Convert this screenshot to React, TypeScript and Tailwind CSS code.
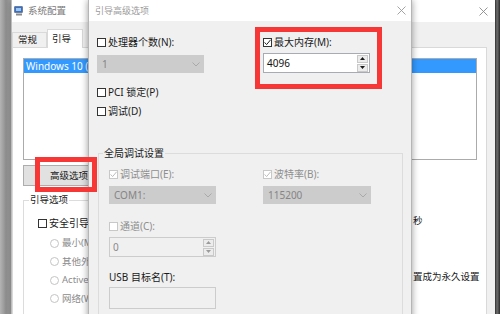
import React from "react";

const font = "font-['Noto_Sans','Noto_Sans_CJK_SC',sans-serif]";

function Box({ checked = false, disabled = false }: { checked?: boolean; disabled?: boolean }) {
    const stroke = disabled ? "#bdbdbd" : "#222222";
    return (
        <span className={`w-[9px] h-[9px] shrink-0 bg-white border flex items-center justify-center ${disabled ? "border-[#c8c8c8]" : "border-[#333333]"}`}>
            {checked && (
                <svg width="7" height="7" viewBox="0 0 7 7">
                    <polyline points="0.6,3.4 2.6,5.6 6.6,0.8" fill="none" stroke={stroke} strokeWidth="1" />
                </svg>
            )}
        </span>
    );
}

function CheckRow({ label, checked, disabled }: { label: string; checked?: boolean; disabled?: boolean }) {
    return (
        <div className={`h-[12px] flex items-center gap-[2px] text-[10px] leading-[12px] whitespace-nowrap ${disabled ? "text-[#8e8e8e]" : "text-[#1a1a1a]"}`}>
            <Box checked={checked} disabled={disabled} />
            <span>{label}</span>
        </div>
    );
}

function Radio({ label }: { label: string }) {
    return (
        <div className="h-[12px] flex items-center gap-[3px] text-[9.5px] leading-[12px] whitespace-nowrap text-[#8c8c8c]">
            <span className="w-[9px] h-[9px] shrink-0 rounded-full bg-white border border-[#c4c4c4]" />
            <span>{label}</span>
        </div>
    );
}

function Select({ value, width = "w-[107px]" }: { value: string; width?: string }) {
    return (
        <div className={`h-[18px] ${width} bg-[#cccccc] flex items-center justify-between pl-[5px] pr-[4px] text-[10px] leading-[12px] text-[#858585]`}>
            <span>{value}</span>
            <svg width="8" height="5" viewBox="0 0 8 5">
                <polyline points="0.5,0.5 4,4 7.5,0.5" fill="none" stroke="#a9a9a9" strokeWidth="1" />
            </svg>
        </div>
    );
}

function Arrow({ up, color }: { up?: boolean; color: string }) {
    return (
        <svg width="5" height="3" viewBox="0 0 5 3">
            <polygon points={up ? "2.5,0 5,3 0,3" : "0,0 5,0 2.5,3"} fill={color} />
        </svg>
    );
}

function Spin({ value, disabled = false }: { value: string; disabled?: boolean }) {
    const c = disabled ? "#9a9a9a" : "#1a1a1a";
    return (
        <div className={`h-[20px] w-[107px] border flex items-center justify-between pl-[3px] pr-px text-[10px] leading-[12px] ${disabled ? "bg-[#f0f0f0] border-[#cccccc] text-[#8a8a8a]" : "bg-white border-[#a9abb2] text-[#111111]"}`}>
            <span>{value}</span>
            <div className="flex flex-col w-[11px] h-[17px] gap-px">
                <div className="flex-1 bg-[#ececec] border border-[#c9c9c9] flex items-center justify-center">
                    <Arrow up color={c} />
                </div>
                <div className="flex-1 bg-[#ececec] border border-[#c9c9c9] flex items-center justify-center">
                    <Arrow color={c} />
                </div>
            </div>
        </div>
    );
}

function CloseX({ color }: { color: string }) {
    return (
        <svg width="9" height="9" viewBox="0 0 9 9">
            <path d="M0.5 0.5 L8.5 8.5 M8.5 0.5 L0.5 8.5" stroke={color} strokeWidth="0.9" />
        </svg>
    );
}

function SystemConfig() {
    return (
        <div className="absolute left-[11px] top-0 w-[484px] h-[330px] bg-[#f0f0f0] border-l border-[#bdbdbd] shadow-[0_0_6px_rgba(0,0,0,0.35)]">
            <div className="h-[22px] bg-white flex items-center pl-[1px] pr-[7px]">
                <svg width="10" height="10" viewBox="0 0 10 10" className="ml-[1px]">
                    <rect x="0.5" y="0.5" width="8" height="6" rx="0.5" fill="#3a6fc4" stroke="#6b7fa3" />
                    <rect x="2" y="2" width="5" height="3" fill="#9cc6f2" />
                    <rect x="2" y="7.5" width="6" height="2" fill="#8a8a8a" />
                </svg>
                <span className="ml-[4px] text-[9.5px] leading-[12px] text-[#7a7a7a]">系统配置</span>
                <span className="ml-auto"><CloseX color="#8a8a8a" /></span>
            </div>
            <div className="flex items-end pt-[7px] text-[9.5px] leading-[12px] text-[#1a1a1a]">
                <div className="w-[35px] h-[15px] border border-b-0 border-[#d9d9d9] pl-[5px] flex items-center">常规</div>
                <div className="w-[36px] h-[19px] -mb-px relative bg-white border border-b-0 border-[#d9d9d9] pl-[4px] flex items-center">引导</div>
            </div>
            <div className="w-[475px] h-[280px] bg-white border border-[#d9d9d9] pt-[10px] pl-[10px] pr-[11px]">
                <div className="w-[454px] h-[102px] border border-[#ababab] bg-white">
                    <div className="h-[14px] bg-[#3399ff] text-white text-[10px] leading-[14px] pl-[2px] whitespace-nowrap">
                        Windows 10 (C
                    </div>
                </div>
                <div className="mt-[5px] w-[124px] h-[21px] bg-[#e1e1e1] border border-[#adadad] pl-[26px] flex items-center text-[9.5px] leading-[12px] text-[#1a1a1a] whitespace-nowrap">
                    高级选项(
                </div>
                <div className="flex">
                    <fieldset className="mt-[8px] w-[240px] h-[140px] border border-[#dcdcdc]">
                        <legend className="ml-[5px] px-px text-[9.5px] leading-[12px] text-[#1a1a1a]">引导选项</legend>
                        <div className="pt-[11px] pl-[14px]">
                            <CheckRow label="安全引导(" />
                            <div className="mt-[8px] pl-[12px] flex flex-col gap-[6.5px]">
                                <Radio label="最小(M" />
                                <Radio label="其他外" />
                                <Radio label="Active" />
                                <Radio label="网络(W" />
                            </div>
                        </div>
                    </fieldset>
                    <div className="ml-auto w-[62px] pt-[29px] text-[9.5px] leading-[12px] text-[#1a1a1a] whitespace-nowrap">
                        <div>秒</div>
                        <div className="mt-[44px]">置成为永久设置</div>
                    </div>
                </div>
            </div>
        </div>
    );
}

function AdvancedOptions() {
    return (
        <div className="absolute left-[88px] top-0 w-[324px] h-[330px] bg-[#f0f0f0] border-x border-[#b5b5b5] shadow-[0_0_7px_rgba(0,0,0,0.4)]">
            <div className="h-[21px] bg-white flex items-center pl-[6px] pr-[5px]">
                <span className="text-[9px] leading-[12px] text-[#9a9a9a]">引导高级选项</span>
                <span className="ml-auto"><CloseX color="#9a9a9a" /></span>
            </div>
            <div className="pl-[8px] pt-[15px]">
                <div className="flex gap-[59px]">
                    <div className="w-[107px]">
                        <CheckRow label="处理器个数(N):" />
                        <div className="mt-[7px]"><Select value="1" /></div>
                        <div className="mt-[13px]"><CheckRow label="PCI 锁定(P)" /></div>
                        <div className="mt-[7px]"><CheckRow label="调试(D)" /></div>
                    </div>
                    <div className="w-[108px]">
                        <CheckRow label="最大内存(M):" checked />
                        <div className="mt-[5px]"><Spin value="4096" /></div>
                    </div>
                </div>
                <fieldset className="mt-[30px] ml-px w-[305px] h-[200px] border border-[#dcdcdc]">
                    <legend className="ml-[4px] px-px text-[10px] leading-[12px] text-[#1a1a1a]">全局调试设置</legend>
                    <div className="pt-[9px] pl-[10px] flex gap-[47px]">
                        <div className="w-[107px]">
                            <CheckRow label="调试端口(E):" checked disabled />
                            <div className="mt-[6px]"><Select value="COM1:" /></div>
                            <div className="mt-[16px]"><CheckRow label="通道(C):" disabled /></div>
                            <div className="mt-[5px]"><Spin value="0" disabled /></div>
                            <div className="mt-[14px] h-[12px] text-[10px] leading-[12px] text-[#1a1a1a] whitespace-nowrap">USB 目标名(T):</div>
                            <div className="mt-[4px] w-[107px] h-[22px] bg-[#f0f0f0] border border-[#cccccc]" />
                        </div>
                        <div className="w-[108px]">
                            <CheckRow label="波特率(B):" checked disabled />
                            <div className="mt-[6px]"><Select value="115200" width="w-[108px]" /></div>
                        </div>
                    </div>
                </fieldset>
            </div>
        </div>
    );
}

export default function App() {
    return (
        <div className={`relative w-[500px] h-[314px] overflow-hidden ${font} bg-[linear-gradient(90deg,#b4b4b4_0px,#8e8e8e_6px,#a5a5a5_11px,#606060_300px,#3a3a3a_495px,#7a7a7a_497px,#2a2a2a_500px)]`}>
            <SystemConfig />
            <AdvancedOptions />
            <div className="absolute left-[255px] top-[27px] w-[127px] h-[62px] border-[5px] border-[#f73636]" />
            <div className="absolute left-[35px] top-[157px] w-[62px] h-[35px] border-[5px] border-[#f73636]" />
        </div>
    );
}
